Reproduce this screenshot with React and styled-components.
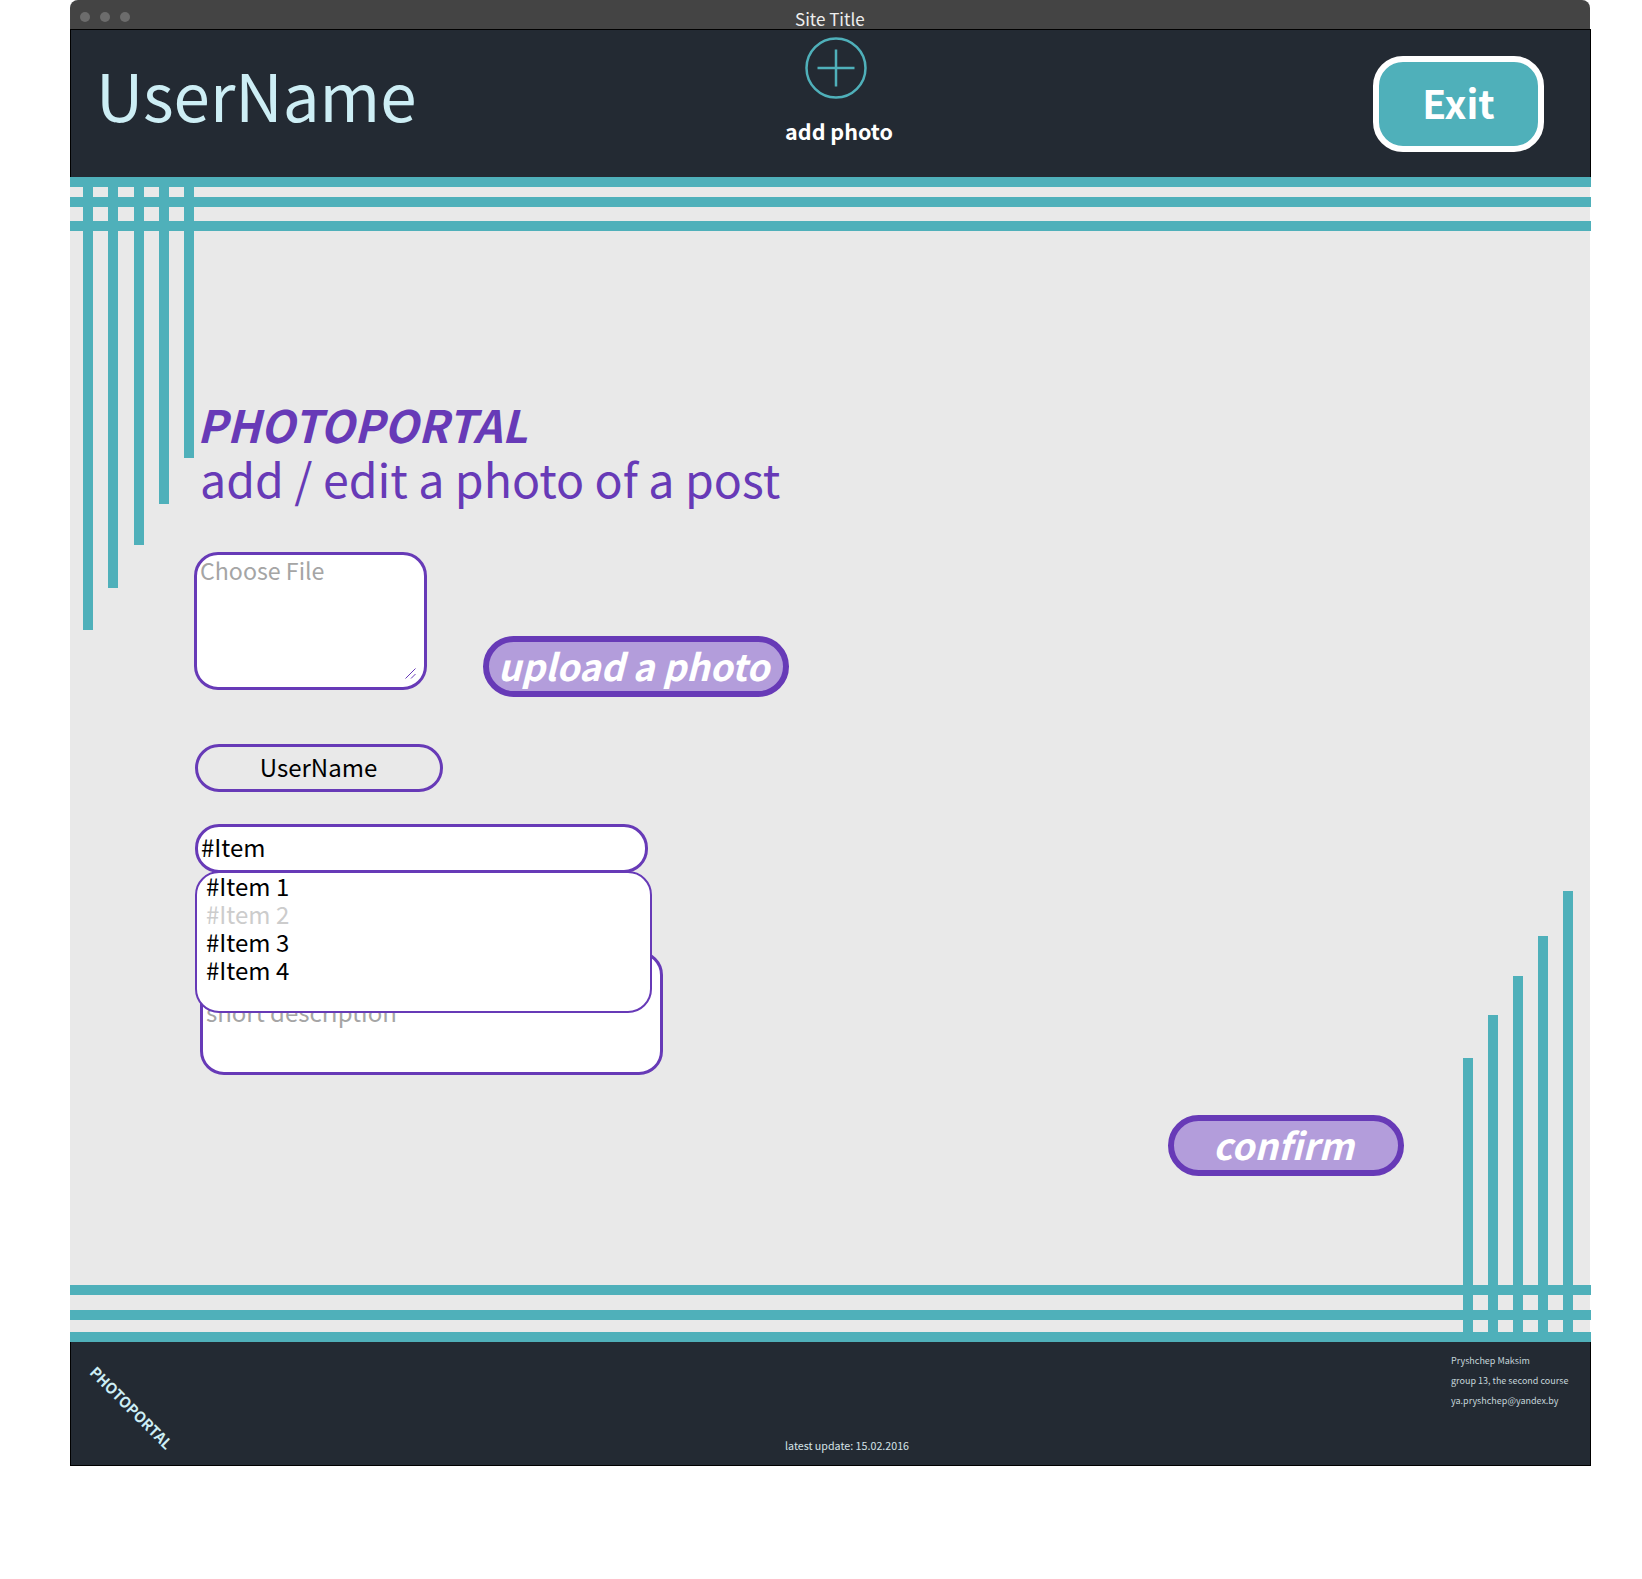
import styled, { createGlobalStyle } from "styled-components";

const TEAL = "#4fb0ba";
const PURPLE = "#673ab7";
const DARK = "#232a33";
const FONT = `"Noto Sans CJK SC", "Noto Sans", sans-serif`;

const leftBars = [453, 411, 368, 327, 281];
const rightBars = [284, 327, 366, 406, 451];
const items = ["#Item 1", "#Item 2", "#Item 3", "#Item 4"];

const App = () => {
  return (
    <Page>
      <GlobalStyle />
      <Window>
        <TitleBar>
          <Dots>
            <Dot />
            <Dot />
            <Dot />
          </Dots>
          <SiteTitle>Site Title</SiteTitle>
        </TitleBar>
        <Header>
          <UserTitle>UserName</UserTitle>
          <AddPhoto>
            <svg width="62" height="62" viewBox="0 0 62 62" fill="none">
              <circle cx="31" cy="31" r="29.5" stroke={TEAL} strokeWidth="2.5" />
              <path d="M12.5 31H49.5M31 12.5V49.5" stroke={TEAL} strokeWidth="2.5" />
            </svg>
            <AddLabel>add photo</AddLabel>
          </AddPhoto>
          <ExitButton>Exit</ExitButton>
        </Header>
        <Main>
          <StripeStack>
            <Stripe />
            <Stripe $gap={10} />
            <Stripe $gap={14.5} />
          </StripeStack>
          <LeftBars>
            {leftBars.map((h) => (
              <Bar key={h} $height={h} />
            ))}
          </LeftBars>
          <RightBars>
            {rightBars.map((h) => (
              <Bar key={h} $height={h} />
            ))}
          </RightBars>
          <Form>
            <Heading>PHOTOPORTAL</Heading>
            <SubHeading>add / edit a photo of a post</SubHeading>
            <UploadRow>
              <FileBox>
                <FileField placeholder="Choose File" />
                <ResizeMark width="11" height="11" viewBox="0 0 11 11" fill="none">
                  <path d="M0.5 10.5L10.5 0.5M6 10.5L10.5 6" stroke={PURPLE} strokeWidth="1" />
                </ResizeMark>
              </FileBox>
              <ActionButton $width={306}>upload a photo</ActionButton>
            </UploadRow>
            <NamePill>UserName</NamePill>
            <SelectWrap>
              <SelectBox>#Item</SelectBox>
              <DropDown>
                {items.map((item, i) => (
                  <DropItem key={item} $muted={i === 1}>
                    {item}
                  </DropItem>
                ))}
              </DropDown>
            </SelectWrap>
            <DescriptionField placeholder="short description" />
          </Form>
          <ConfirmRow>
            <ActionButton $width={236}>confirm</ActionButton>
          </ConfirmRow>
          <BottomStripes>
            <Stripe />
            <Stripe $gap={15} />
            <Stripe $gap={12} />
          </BottomStripes>
        </Main>
        <Footer>
          <FooterLogo>PHOTOPORTAL</FooterLogo>
          <LatestUpdate>latest update: 15.02.2016</LatestUpdate>
          <Contacts>
            <div>Pryshchep Maksim</div>
            <div>group 13, the second course</div>
            <div>ya.pryshchep@yandex.by</div>
          </Contacts>
        </Footer>
      </Window>
    </Page>
  );
};

export default App;

const GlobalStyle = createGlobalStyle`
  html, body {
    margin: 0;
    padding: 0;
    background: #fff;
  }
  * {
    box-sizing: border-box;
  }
`;
const Page = styled.div`
  width: 1642px;
  height: 1579px;
  padding-left: 70px;
  font-family: ${FONT};
  overflow: hidden;
`;
const Window = styled.div`
  width: 1521px;
`;
const TitleBar = styled.div`
  position: relative;
  height: 29px;
  width: 1520px;
  background: #444444;
  border-radius: 8px 8px 0 0;
`;
const Dots = styled.div`
  display: flex;
  gap: 10px;
  padding: 12px 0 0 10px;
`;
const Dot = styled.span`
  width: 10px;
  height: 10px;
  border-radius: 50%;
  background: #6c6c6c;
`;
const SiteTitle = styled.div`
  position: absolute;
  left: 725px;
  top: 6px;
  font-size: 17px;
  line-height: 26px;
  color: #eeeeee;
`;
const Header = styled.header`
  display: grid;
  grid-template-columns: 711px 108px 1fr;
  height: 147.5px;
  background: ${DARK};
  border: 1px solid #000;
  border-bottom: 0;
`;
const UserTitle = styled.div`
  padding: 18px 0 0 25px;
  font-size: 65.5px;
  line-height: 92px;
  font-weight: 400;
  color: #cdeef5;
`;
const AddPhoto = styled.div`
  display: flex;
  flex-direction: column;
  align-items: center;
  padding-top: 7px;
`;
const AddLabel = styled.div`
  margin: 17px 0 0 6px;
  font-size: 21.5px;
  line-height: 30px;
  font-weight: 700;
  color: #fff;
  white-space: nowrap;
`;
const ExitButton = styled.button`
  justify-self: end;
  width: 171px;
  height: 96px;
  margin: 26px 46px 0 0;
  padding: 0 0 4px;
  border: 6px solid #fff;
  border-radius: 30px;
  background: ${TEAL};
  color: #fff;
  font-family: ${FONT};
  font-size: 39px;
  font-weight: 700;
`;
const Main = styled.main`
  position: relative;
  display: flex;
  flex-direction: column;
  width: 1520px;
  height: 1165.5px;
  background: #e9e9e9;
`;
const StripeStack = styled.div`
  display: flex;
  flex-direction: column;
  width: 1521px;
`;
const BottomStripes = styled(StripeStack)`
  margin-top: auto;
`;
const Stripe = styled.div`
  height: 10px;
  margin-top: ${(props) => props.$gap || 0}px;
  background: ${TEAL};
`;
const LeftBars = styled.div`
  position: absolute;
  top: 0;
  left: 13px;
  display: flex;
  gap: 15.25px;
  align-items: flex-start;
`;
const RightBars = styled.div`
  position: absolute;
  bottom: 0;
  right: 17px;
  display: flex;
  gap: 15px;
  align-items: flex-end;
`;
const Bar = styled.div`
  width: 10px;
  height: ${(props) => props.$height}px;
  background: ${TEAL};
`;
const Form = styled.div`
  display: flex;
  flex-direction: column;
  align-items: flex-start;
  padding: 165.5px 0 0 125px;
`;
const Heading = styled.h1`
  margin: 0 0 0 2px;
  font-size: 44.5px;
  line-height: 53px;
  font-weight: 700;
  font-style: italic;
  color: ${PURPLE};
`;
const SubHeading = styled.h2`
  margin: 0 0 0 5px;
  font-size: 46.5px;
  line-height: 55px;
  font-weight: 400;
  color: ${PURPLE};
`;
const UploadRow = styled.div`
  display: flex;
  gap: 56px;
  margin-top: 47px;
`;
const FileBox = styled.div`
  position: relative;
  width: 233px;
  height: 138px;
  margin-left: -1px;
`;
const FileField = styled.textarea`
  display: block;
  width: 100%;
  height: 100%;
  padding: 0 3px;
  border: 3px solid ${PURPLE};
  border-radius: 24px;
  background: #fff;
  outline: none;
  resize: none;
  font-family: ${FONT};
  font-size: 23.2px;
  line-height: 30px;
  &::placeholder {
    color: #a5a5a5;
    opacity: 1;
  }
`;
const ResizeMark = styled.svg`
  position: absolute;
  right: 11px;
  bottom: 11px;
`;
const ActionButton = styled.button`
  width: ${(props) => props.$width}px;
  height: 61px;
  margin-top: 84px;
  padding: 0 5px 8px 0;
  border: 6px solid ${PURPLE};
  border-radius: 31px;
  background: #b39ddb;
  color: #fff;
  font-family: ${FONT};
  font-size: 36.7px;
  line-height: 46px;
  font-weight: 700;
  font-style: italic;
  white-space: nowrap;
`;
const ConfirmRow = styled.div`
  display: flex;
  justify-content: flex-end;
  padding-right: 186px;
  ${ActionButton} {
    margin-top: 40px;
  }
`;
const NamePill = styled.div`
  width: 248px;
  height: 48px;
  margin-top: 47px;
  padding-right: 1px;
  border: 3px solid ${PURPLE};
  border-radius: 24px;
  font-size: 24px;
  line-height: 40px;
  text-align: center;
  color: #000;
`;
const SelectWrap = styled.div`
  position: relative;
  margin-top: 32px;
`;
const SelectBox = styled.div`
  width: 453px;
  height: 49px;
  padding-left: 3px;
  border: 3px solid ${PURPLE};
  border-radius: 24px;
  background: #fff;
  font-size: 24px;
  line-height: 40px;
  color: #000;
`;
const DropDown = styled.div`
  position: absolute;
  top: 47px;
  left: 0;
  width: 457px;
  height: 142px;
  padding-left: 9px;
  border: 2px solid ${PURPLE};
  border-radius: 24px;
  background: #fff;
`;
const DropItem = styled.div`
  font-size: 24px;
  line-height: 28px;
  color: ${(props) => (props.$muted ? "#cccccc" : "#000")};
  &:first-child {
    margin-top: -1px;
  }
`;
const DescriptionField = styled.textarea`
  display: block;
  width: 463px;
  height: 124px;
  margin: 78px 0 0 5px;
  padding: 40px 3px 0;
  border: 3px solid ${PURPLE};
  border-radius: 24px;
  background: #fff;
  outline: none;
  resize: none;
  font-family: ${FONT};
  font-size: 24px;
  line-height: 36px;
  &::placeholder {
    color: #a5a5a5;
    opacity: 1;
  }
`;
const Footer = styled.footer`
  display: grid;
  grid-template-columns: 714px 666px 1fr;
  height: 124px;
  background: ${DARK};
  border: 1px solid #000;
  border-top: 0;
`;
const FooterLogo = styled.div`
  width: fit-content;
  height: fit-content;
  margin-top: 20px;
  font-size: 14.7px;
  line-height: 20px;
  font-weight: 700;
  color: #cdeef5;
  transform: translate(29px, 0) rotate(45deg);
  transform-origin: 0 0;
`;
const LatestUpdate = styled.div`
  padding-top: 94px;
  font-size: 10.7px;
  line-height: 20px;
  color: #d5e3e8;
`;
const Contacts = styled.div`
  padding-top: 9px;
  font-size: 9px;
  line-height: 20px;
  color: #c4d5da;
  white-space: nowrap;
`;
